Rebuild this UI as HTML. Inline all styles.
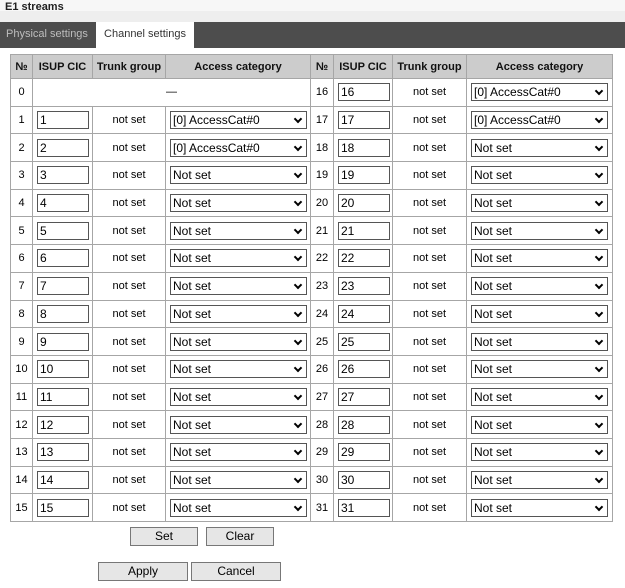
<!DOCTYPE html>
<html><head><style>
body{margin:0;width:625px;height:588px;background:#fff;font-family:"Liberation Sans",Arial,sans-serif;font-size:11px;color:#000;position:relative;overflow:hidden}
.title{position:absolute;left:0;top:0;width:625px;height:22px;background:linear-gradient(#f7f7f7 0,#f7f7f7 11px,#eeeeee 11px);}
.title span{position:absolute;left:5px;top:1px;font-size:11px;font-weight:bold;color:#222}
.tabs{position:absolute;left:0;top:22px;width:625px;height:26px;background:#4d4d4d}
.tab1{position:absolute;left:6px;top:6px;color:#bdbdbd;font-size:11px}
.tab2{position:absolute;left:96px;top:0;width:98px;height:26px;background:#fff;color:#333;font-size:11px;line-height:24px;text-align:center}
table{position:absolute;left:10px;top:54px;border-collapse:collapse;table-layout:fixed;width:602px}
td,th{border:1px solid #a6a6a6;text-align:center;padding:0;font-size:11px}
th{background:#cccccc;height:23px;font-weight:bold;color:#111}
td{height:26.7px}
td.n{text-align:center}
input{width:48px;height:16px;border:1px solid #555;font:12px "Liberation Sans",Arial,sans-serif;padding:0 0 0 2px;margin:0;box-sizing:content-box;display:block;margin-left:4px}
.sel{width:133px;height:16px;border:1px solid #555;text-align:left;margin-left:4px;font-size:12px;line-height:16px;padding-left:2px;position:relative;box-sizing:content-box}
.sel:after{content:"";position:absolute;right:5px;top:4px;width:4px;height:4px;border-right:2px solid #000;border-bottom:2px solid #000;transform:rotate(45deg)}
.btn{position:absolute;height:17px;border:1px solid #777;background:#e6e6e6;font-size:12px;text-align:center;line-height:17px;box-sizing:content-box}
</style></head><body>
<div class="title"><span>E1 streams</span></div>
<div class="tabs"><span class="tab1">Physical settings</span><div class="tab2">Channel settings</div></div>
<table>
<colgroup><col style="width:22px"><col style="width:60px"><col style="width:73px"><col style="width:145px"><col style="width:23px"><col style="width:59px"><col style="width:74px"><col style="width:146px"></colgroup>
<tr><th>№</th><th>ISUP CIC</th><th>Trunk group</th><th>Access category</th><th>№</th><th>ISUP CIC</th><th>Trunk group</th><th>Access category</th></tr>
<tr><td class="n">0</td><td colspan="3">—</td><td class="n">16</td><td><input value="16"></td><td>not set</td><td><div class="sel">[0] AccessCat#0</div></td></tr>
<tr><td class="n">1</td><td><input value="1"></td><td>not set</td><td><div class="sel">[0] AccessCat#0</div></td><td class="n">17</td><td><input value="17"></td><td>not set</td><td><div class="sel">[0] AccessCat#0</div></td></tr>
<tr><td class="n">2</td><td><input value="2"></td><td>not set</td><td><div class="sel">[0] AccessCat#0</div></td><td class="n">18</td><td><input value="18"></td><td>not set</td><td><div class="sel">Not set</div></td></tr>
<tr><td class="n">3</td><td><input value="3"></td><td>not set</td><td><div class="sel">Not set</div></td><td class="n">19</td><td><input value="19"></td><td>not set</td><td><div class="sel">Not set</div></td></tr>
<tr><td class="n">4</td><td><input value="4"></td><td>not set</td><td><div class="sel">Not set</div></td><td class="n">20</td><td><input value="20"></td><td>not set</td><td><div class="sel">Not set</div></td></tr>
<tr><td class="n">5</td><td><input value="5"></td><td>not set</td><td><div class="sel">Not set</div></td><td class="n">21</td><td><input value="21"></td><td>not set</td><td><div class="sel">Not set</div></td></tr>
<tr><td class="n">6</td><td><input value="6"></td><td>not set</td><td><div class="sel">Not set</div></td><td class="n">22</td><td><input value="22"></td><td>not set</td><td><div class="sel">Not set</div></td></tr>
<tr><td class="n">7</td><td><input value="7"></td><td>not set</td><td><div class="sel">Not set</div></td><td class="n">23</td><td><input value="23"></td><td>not set</td><td><div class="sel">Not set</div></td></tr>
<tr><td class="n">8</td><td><input value="8"></td><td>not set</td><td><div class="sel">Not set</div></td><td class="n">24</td><td><input value="24"></td><td>not set</td><td><div class="sel">Not set</div></td></tr>
<tr><td class="n">9</td><td><input value="9"></td><td>not set</td><td><div class="sel">Not set</div></td><td class="n">25</td><td><input value="25"></td><td>not set</td><td><div class="sel">Not set</div></td></tr>
<tr><td class="n">10</td><td><input value="10"></td><td>not set</td><td><div class="sel">Not set</div></td><td class="n">26</td><td><input value="26"></td><td>not set</td><td><div class="sel">Not set</div></td></tr>
<tr><td class="n">11</td><td><input value="11"></td><td>not set</td><td><div class="sel">Not set</div></td><td class="n">27</td><td><input value="27"></td><td>not set</td><td><div class="sel">Not set</div></td></tr>
<tr><td class="n">12</td><td><input value="12"></td><td>not set</td><td><div class="sel">Not set</div></td><td class="n">28</td><td><input value="28"></td><td>not set</td><td><div class="sel">Not set</div></td></tr>
<tr><td class="n">13</td><td><input value="13"></td><td>not set</td><td><div class="sel">Not set</div></td><td class="n">29</td><td><input value="29"></td><td>not set</td><td><div class="sel">Not set</div></td></tr>
<tr><td class="n">14</td><td><input value="14"></td><td>not set</td><td><div class="sel">Not set</div></td><td class="n">30</td><td><input value="30"></td><td>not set</td><td><div class="sel">Not set</div></td></tr>
<tr><td class="n">15</td><td><input value="15"></td><td>not set</td><td><div class="sel">Not set</div></td><td class="n">31</td><td><input value="31"></td><td>not set</td><td><div class="sel">Not set</div></td></tr>
</table>
<div class="btn" style="left:130px;top:527px;width:66px">Set</div>
<div class="btn" style="left:206px;top:527px;width:66px">Clear</div>
<div class="btn" style="left:98px;top:562px;width:88px">Apply</div>
<div class="btn" style="left:191px;top:562px;width:88px">Cancel</div>
</body></html>
